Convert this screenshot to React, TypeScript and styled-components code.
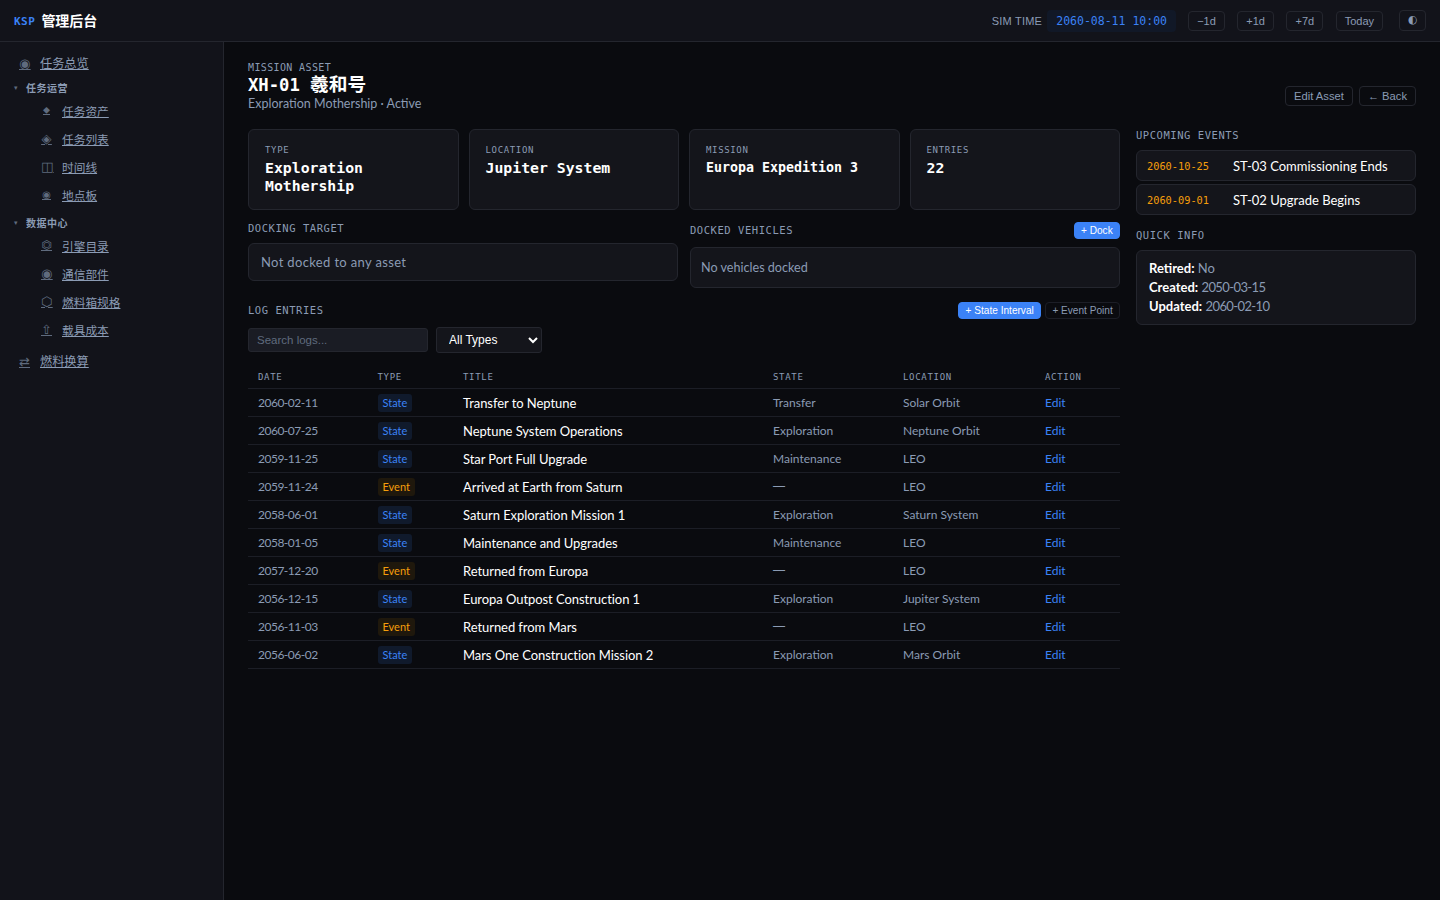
import React from "react";
import styled, { createGlobalStyle } from "styled-components";

const SANS = `"Lato", "Noto Sans CJK SC", sans-serif`;
const MONO = `"DejaVu Sans Mono", "Noto Sans CJK SC", monospace`;
const UI = `"Liberation Sans", "Noto Sans CJK SC", sans-serif`;

const Global = createGlobalStyle`
  html, body { margin: 0; padding: 0; background: #0a0b0f; }
  * { box-sizing: border-box; }
  body { font-family: ${SANS}; color: #fff; font-size: 13px; }
`;

const Shell = styled.div`
  width: 1440px; height: 900px; display: flex; flex-direction: column; overflow: hidden;
`;
const Topbar = styled.header`
  height: 42px; flex: none; display: flex; align-items: center; padding: 0 14px;
  background: #12131a; border-bottom: 1px solid #24262e;
`;
const Brand = styled.div`
  font-family: ${MONO}; font-size: 14px; font-weight: 700; color: #fff; display: flex; gap: 6px; align-items: center; flex: 1; padding-bottom: 1px;
`;
const BrandKsp = styled.span` color: #3b82f6; font-size: 11px; letter-spacing: .5px; margin-top: 2px; `;
const SimLabel = styled.span` font-family: ${UI}; font-size: 11px; color: #8b9bb4; letter-spacing: .2px; margin-right: 5px; `;
const SimValue = styled.span`
  font-family: ${MONO}; font-size: 11.5px; color: #3b82f6; background: #111827; border-radius: 4px;
  padding: 4px 9px; height: 22px; margin-right: 12px; line-height: 14px; width: 129px; text-align: center; white-space: nowrap;
`;
const TopBtn = styled.button<{ $gap?: number }>`
  font-family: ${UI}; font-size: 11px; color: #8b9bb4; background: transparent; border: 1px solid #24262e;
  border-radius: 4px; height: 20px; padding: 0 8px; margin-right: ${p => p.$gap ?? 12.5}px; cursor: pointer;
`;
const ThemeBtn = styled.button`
  font-family: "DejaVu Sans", sans-serif; font-size: 11px; color: #8b9bb4; background: transparent; border: 1px solid #24262e;
  border-radius: 4px; height: 21px; width: 27px; padding: 0 0 2px; cursor: pointer;
`;
const Body = styled.div` flex: 1; display: flex; min-height: 0; `;
const Sidebar = styled.nav`
  width: 224px; flex: none; background: #12131a; border-right: 1px solid #24262e; padding: 7px 0 0 19px;
`;
const Link = styled.a<{ $sub?: boolean; $mt?: number }>`
  display: flex; align-items: center; height: 28px; padding-left: ${p => (p.$sub ? 22 : 0)}px; margin-top: ${p => p.$mt ?? 0}px;
  color: #8b9bb4; font-size: ${p => (p.$sub ? 11.7 : 12.2)}px; font-family: "Noto Sans CJK SC", sans-serif; text-decoration: underline; cursor: pointer;
`;
const Glyph = styled.span<{ $size?: number }>`
  display: inline-block; width: 11px; margin-right: 10px; flex: none; color: #5f6b7e; text-align: center;
  font-size: ${p => p.$size ?? 13}px; text-decoration: underline; font-family: "DejaVu Sans", sans-serif;
`;
const Group = styled.div<{ $mt: number }>`
  display: flex; align-items: center; height: 17px; margin: ${p => p.$mt}px 0 0 -5px; gap: 8px;
  color: #8b9bb4; font-size: 10px; font-weight: 700; letter-spacing: .5px; font-family: "Noto Sans CJK SC", sans-serif;
`;
const Caret = styled.span` font-size: 7px; color: #5f6b7e; font-family: "DejaVu Sans", sans-serif; `;
const Main = styled.main` flex: 1; padding: 20px 24px; display: grid; grid-template-columns: 872px 280px; column-gap: 16px; align-content: start; `;
const PageHead = styled.div`
  grid-column: 1 / -1; display: flex; justify-content: space-between; align-items: flex-end; margin-bottom: 17px;
`;
const Eyebrow = styled.div` font-family: ${MONO}; font-size: 10px; color: #8b9bb4; letter-spacing: .37px; line-height: 12px; `;
const Title = styled.h1` font-family: ${MONO}; font-size: 17.2px; font-weight: 700; margin: 0; line-height: 21px; color: #fff; `;
const TitleCjk = styled.span` font-size: 18.7px; `;
const Sub = styled.div` font-size: 12.5px; color: #8b9bb4; line-height: 16px; `;
const HeadActions = styled.div` display: flex; gap: 6px; margin-bottom: 6px; `;
const HeadBtn = styled.button`
  font-family: ${UI}; font-size: 11.2px; color: #8b9bb4; background: transparent; border: 1px solid #24262e;
  border-radius: 4px; height: 20px; padding: 0 8px; cursor: pointer;
`;
const Left = styled.div` min-width: 0; `;
const Right = styled.aside` min-width: 0; `;
const Stats = styled.div` display: grid; grid-template-columns: repeat(4, 1fr); gap: 10px; margin-bottom: 12px; `;
const Stat = styled.div` background: #14151b; border: 1px solid #24262e; border-radius: 6px; padding: 14px 16px; height: 81px; `;
const StatLabel = styled.div` font-family: ${MONO}; font-size: 9px; color: #8b9bb4; letter-spacing: .65px; line-height: 13px; margin-bottom: 2px; `;
const StatValue = styled.div<{ $size?: number }>` font-family: ${MONO}; font-size: ${p => p.$size ?? 14.8}px; font-weight: 700; color: #fff; line-height: 18px; `;
const Dock = styled.div` display: grid; grid-template-columns: 430px 430px; gap: 12px; margin-bottom: 14px; align-items: start; `;
const SectionRow = styled.div` display: flex; align-items: center; justify-content: space-between; margin-bottom: 8px; `;
const SectionTitle = styled.div` font-family: ${MONO}; font-size: 10.5px; color: #8b9bb4; letter-spacing: .55px; font-weight: 400; line-height: 13px; `;
const SmallBtn = styled.button<{ $primary?: boolean }>`
  font-family: ${UI}; font-size: 10.1px; height: 17px; padding: 0 6.3px; border-radius: 4px; cursor: pointer;
  color: ${p => (p.$primary ? "#fff" : "#8b9bb4")};
  background: ${p => (p.$primary ? "#3b82f6" : "transparent")};
  border: 1px solid ${p => (p.$primary ? "#3b82f6" : "#1c1e26")};
`;
const BtnRow = styled.div` display: flex; gap: 4px; `;
const Panel = styled.div<{ $h: number; $px: number; $size: number; $ls?: number }>`
  height: ${p => p.$h}px; background: #14151b; border: 1px solid #24262e; border-radius: 6px;
  display: flex; align-items: center; padding: 0 ${p => p.$px}px; color: #8b9bb4; font-size: ${p => p.$size}px; letter-spacing: ${p => p.$ls ?? 0}px;
`;
const Filters = styled.div` display: flex; gap: 8px; align-items: center; margin-bottom: 11px; `;
const Search = styled.input`
  width: 180px; height: 24px; background: #1a1c24; border: 1px solid #24262e; border-radius: 3px; padding: 0 8px;
  font-family: ${UI}; font-size: 11.5px; color: #fff;
  &::placeholder { color: #5f6b7e; }
`;
const Select = styled.select`
  width: 106px; height: 26px; background: #14151b; border: 1px solid #24262e; border-radius: 3px; padding: 0 8px;
  font-family: ${UI}; font-size: 12px; color: #fff;
`;
const Table = styled.table` width: 100%; border-collapse: collapse; table-layout: fixed; `;
const Th = styled.th<{ $w: number }>`
  width: ${p => p.$w}px; text-align: left; font-family: ${MONO}; font-size: 9px; font-weight: 400; color: #8b9bb4; letter-spacing: .7px;
  height: 24px; padding: 2px 10px 0; border-bottom: 1px solid #1c1e26;
`;
const Td = styled.td<{ $dash?: boolean }>`
  height: 28px; padding: 0 10px; border-bottom: 1px solid #1c1e26; font-size: 12px; color: #8b9bb4;
  font-family: ${p => (p.$dash ? UI : SANS)};
`;
const DateTd = styled(Td)` letter-spacing: -.5px; `;
const TitleTd = styled(Td)` color: #fff; font-size: 13px; letter-spacing: -.06px; padding-top: 1px; `;
const Badge = styled.span<{ $event?: boolean }>`
  display: inline-block; height: 18px; line-height: 18px; padding: 0 5px; border-radius: 3px; font-size: 11px; vertical-align: middle; margin-top: 2px;
  color: ${p => (p.$event ? "#f59e0b" : "#3b82f6")};
  background: ${p => (p.$event ? "#1f180c" : "#101a2c")};
`;
const EditLink = styled.a` color: #3b82f6; font-size: 12px; cursor: pointer; `;
const EventCard = styled.div`
  display: flex; align-items: center; height: 31px; background: #14151b; border: 1px solid #24262e; border-radius: 6px;
  padding: 0 10px; margin-bottom: 3px; font-size: 13px; color: #fff;
`;
const EventDate = styled.span` font-family: ${MONO}; font-size: 10.3px; color: #f59e0b; width: 86px; flex: none; `;
const Info = styled.div`
  background: #14151b; border: 1px solid #24262e; border-radius: 6px; padding: 8px 12px; font-size: 13px; line-height: 19px; color: #8b9bb4;
  & strong { color: #fff; }
`;
const InfoDate = styled.span` letter-spacing: -.6px; `;
const RightTitle = styled(SectionTitle)<{ $mt?: number }>` margin-top: ${p => p.$mt ?? 0}px; margin-bottom: 8px; `;

const rows: [string, "State" | "Event", string, string, string][] = [
  ["2060-02-11", "State", "Transfer to Neptune", "Transfer", "Solar Orbit"],
  ["2060-07-25", "State", "Neptune System Operations", "Exploration", "Neptune Orbit"],
  ["2059-11-25", "State", "Star Port Full Upgrade", "Maintenance", "LEO"],
  ["2059-11-24", "Event", "Arrived at Earth from Saturn", "—", "LEO"],
  ["2058-06-01", "State", "Saturn Exploration Mission 1", "Exploration", "Saturn System"],
  ["2058-01-05", "State", "Maintenance and Upgrades", "Maintenance", "LEO"],
  ["2057-12-20", "Event", "Returned from Europa", "—", "LEO"],
  ["2056-12-15", "State", "Europa Outpost Construction 1", "Exploration", "Jupiter System"],
  ["2056-11-03", "Event", "Returned from Mars", "—", "LEO"],
  ["2056-06-02", "State", "Mars One Construction Mission 2", "Exploration", "Mars Orbit"],
];

export default function App() {
  return (
    <Shell>
      <Global />
      <Topbar>
        <Brand><BrandKsp>KSP</BrandKsp>管理后台</Brand>
        <SimLabel>SIM TIME</SimLabel>
        <SimValue>2060-08-11 10:00</SimValue>
        <TopBtn>−1d</TopBtn>
        <TopBtn>+1d</TopBtn>
        <TopBtn>+7d</TopBtn>
        <TopBtn $gap={16}>Today</TopBtn>
        <ThemeBtn>◐</ThemeBtn>
      </Topbar>
      <Body>
        <Sidebar>
          <Link><Glyph>◉</Glyph>任务总览</Link>
          <Group $mt={2}><Caret>▾</Caret>任务运营</Group>
          <Link $sub><Glyph $size={10}>⬥</Glyph>任务资产</Link>
          <Link $sub><Glyph>◈</Glyph>任务列表</Link>
          <Link $sub><Glyph>◫</Glyph>时间线</Link>
          <Link $sub><Glyph $size={10}>◉</Glyph>地点板</Link>
          <Group $mt={6}><Caret>▾</Caret>数据中心</Group>
          <Link $sub><Glyph $size={12}>⏣</Glyph>引擎目录</Link>
          <Link $sub><Glyph>◉</Glyph>通信部件</Link>
          <Link $sub><Glyph>⬡</Glyph>燃料箱规格</Link>
          <Link $sub><Glyph>⇧</Glyph>载具成本</Link>
          <Link $mt={4}><Glyph>⇄</Glyph>燃料换算</Link>
        </Sidebar>
        <Main>
          <PageHead>
            <div>
              <Eyebrow>MISSION ASSET</Eyebrow>
              <Title>XH-01 <TitleCjk>羲和号</TitleCjk></Title>
              <Sub>Exploration Mothership · Active</Sub>
            </div>
            <HeadActions>
              <HeadBtn>Edit Asset</HeadBtn>
              <HeadBtn>← Back</HeadBtn>
            </HeadActions>
          </PageHead>
          <Left>
            <Stats>
              <Stat><StatLabel>TYPE</StatLabel><StatValue>Exploration Mothership</StatValue></Stat>
              <Stat><StatLabel>LOCATION</StatLabel><StatValue>Jupiter System</StatValue></Stat>
              <Stat><StatLabel>MISSION</StatLabel><StatValue $size={13.3}>Europa Expedition 3</StatValue></Stat>
              <Stat><StatLabel>ENTRIES</StatLabel><StatValue>22</StatValue></Stat>
            </Stats>
            <Dock>
              <div>
                <SectionRow><SectionTitle>DOCKING TARGET</SectionTitle></SectionRow>
                <Panel $h={38} $px={12} $size={13} $ls={0.35}>Not docked to any asset</Panel>
              </div>
              <div>
                <SectionRow><SectionTitle>DOCKED VEHICLES</SectionTitle><SmallBtn $primary>+ Dock</SmallBtn></SectionRow>
                <Panel $h={41} $px={10} $size={12.6}>No vehicles docked</Panel>
              </div>
            </Dock>
            <SectionRow>
              <SectionTitle>LOG ENTRIES</SectionTitle>
              <BtnRow><SmallBtn $primary>+ State Interval</SmallBtn><SmallBtn>+ Event Point</SmallBtn></BtnRow>
            </SectionRow>
            <Filters>
              <Search placeholder="Search logs..." />
              <Select defaultValue="All Types"><option>All Types</option></Select>
            </Filters>
            <Table>
              <thead>
                <tr>
                  <Th $w={119.5}>DATE</Th><Th $w={85.5}>TYPE</Th><Th $w={310}>TITLE</Th><Th $w={130}>STATE</Th><Th $w={142}>LOCATION</Th><Th $w={85}>ACTION</Th>
                </tr>
              </thead>
              <tbody>
                {rows.map(r => (
                  <tr key={r[2]}>
                    <DateTd>{r[0]}</DateTd>
                    <Td><Badge $event={r[1] === "Event"}>{r[1]}</Badge></Td>
                    <TitleTd>{r[2]}</TitleTd>
                    <Td $dash={r[3] === "—"}>{r[3]}</Td>
                    <Td>{r[4]}</Td>
                    <Td><EditLink>Edit</EditLink></Td>
                  </tr>
                ))}
              </tbody>
            </Table>
          </Left>
          <Right>
            <RightTitle>UPCOMING EVENTS</RightTitle>
            <EventCard><EventDate>2060-10-25</EventDate>ST-03 Commissioning Ends</EventCard>
            <EventCard><EventDate>2060-09-01</EventDate>ST-02 Upgrade Begins</EventCard>
            <RightTitle $mt={14}>QUICK INFO</RightTitle>
            <Info>
              <div><strong>Retired:</strong> No</div>
              <div><strong>Created:</strong> <InfoDate>2050-03-15</InfoDate></div>
              <div><strong>Updated:</strong> <InfoDate>2060-02-10</InfoDate></div>
            </Info>
          </Right>
        </Main>
      </Body>
    </Shell>
  );
}
